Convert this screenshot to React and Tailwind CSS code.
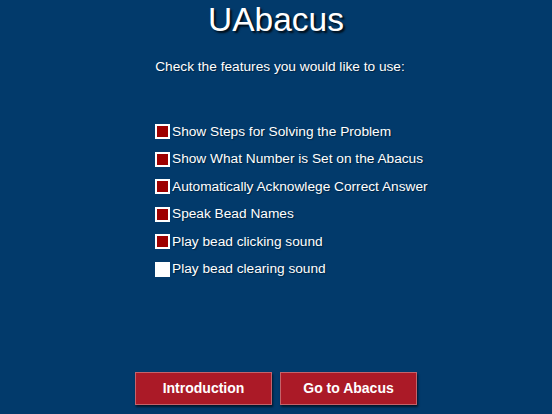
const OPTIONS = [
  { label: "Show Steps for Solving the Problem", on: true },
  { label: "Show What Number is Set on the Abacus", on: true },
  { label: "Automatically Acknowlege Correct Answer", on: true },
  { label: "Speak Bead Names", on: true },
  { label: "Play bead clicking sound", on: true },
  { label: "Play bead clearing sound", on: false },
];

export default function App() {
  return (
    <div className="w-[552px] h-[414px] bg-[#023a6b] text-white flex flex-col overflow-hidden"
      style={{ fontFamily: '"Liberation Sans", Arial, sans-serif' }}>
      <h1 className="mt-[3px] text-center text-[33.5px] leading-none [text-shadow:2px_2px_2px_rgba(0,0,0,0.8)]">UAbacus</h1>
      <p className="mt-[23px] pl-[8px] text-center text-[13.7px] leading-none [text-shadow:1px_1px_1px_rgba(0,0,0,0.4)]">
        Check the features you would like to use:
      </p>

      <div className="mt-[51px] ml-[155px] flex flex-col gap-[12.5px]">
        {OPTIONS.map((o, i) => (
          <div key={i} className="flex items-center gap-[2px] h-[15px]">
            <div className="w-[15px] h-[15px] border-2 border-white bg-white flex">
              <div className={`flex-1 ${o.on ? "bg-[#9e0000]" : "bg-white"}`} />
            </div>
            <span className="text-[13.7px] leading-none [text-shadow:1px_1px_1px_rgba(0,0,0,0.4)]">{o.label}</span>
          </div>
        ))}
      </div>

      <div className="mt-auto mb-[9px] flex justify-center gap-[8px]">
        <button className="w-[137px] h-[33px] bg-[#ab1a27] border border-[#c4636b] shadow-[1px_2px_2px_rgba(0,0,0,0.6)] text-[14px] font-bold">
          Introduction
        </button>
        <button className="w-[137px] h-[33px] bg-[#ab1a27] border border-[#c4636b] shadow-[1px_2px_2px_rgba(0,0,0,0.6)] text-[14px] font-bold">
          Go to Abacus
        </button>
      </div>
    </div>
  );
}
